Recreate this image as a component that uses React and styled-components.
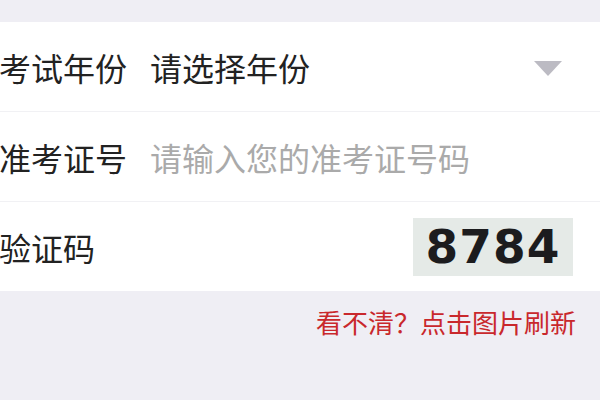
import styled, { createGlobalStyle } from "styled-components";

const GlobalStyle = createGlobalStyle`
    html, body {
        margin: 0;
        padding: 0;
        background: #efeef4;
        overflow: hidden;
    }
    body {
        font-family: "Noto Sans CJK SC", "Noto Sans", sans-serif;
    }
`;

export default function App() {
    return (
        <PageStyled>
            <GlobalStyle />
            <Panel>
                <Row>
                    <Label>考试年份</Label>
                    <Value>请选择年份</Value>
                    <Caret />
                </Row>
                <Row>
                    <Label>准考证号</Label>
                    <Value $placeholder>请输入您的准考证号码</Value>
                </Row>
                <Row>
                    <Label>验证码</Label>
                    <Value />
                    <Captcha>8784</Captcha>
                </Row>
            </Panel>
            <Hint>看不清？点击图片刷新</Hint>
        </PageStyled>
    );
}

const PageStyled = styled.div`
    width: 600px;
    height: 400px;
    padding-top: 22px;
    box-sizing: border-box;
    background: #efeef4;
`;

const Panel = styled.div`
    background: #ffffff;
    display: flex;
    flex-direction: column;
`;

const Row = styled.div`
    height: 89px;
    display: flex;
    align-items: center;
    padding-right: 27px;

    & + & {
        border-top: 1px solid #f1f1f4;
    }
`;

const Label = styled.div`
    width: 151px;
    margin-left: -1px;
    flex-shrink: 0;
    font-size: 32px;
    color: #222222;
    line-height: 1;
`;

const Value = styled.div`
    flex: 1;
    font-size: 32px;
    line-height: 1;
    color: ${(p) => (p.$placeholder ? "#aaaaaa" : "#222222")};
`;

const Caret = styled.div`
    width: 0;
    height: 0;
    border-left: 14px solid transparent;
    border-right: 14px solid transparent;
    border-top: 15px solid #bcbbc3;
    margin-right: 11px;
    margin-top: 4px;
`;

const Captcha = styled.div`
    width: 160px;
    height: 58px;
    background: #e5eae7;
    display: flex;
    align-items: center;
    justify-content: center;
    font-family: "DejaVu Sans", sans-serif;
    font-weight: bold;
    font-size: 47px;
    letter-spacing: 1px;
    color: #1c1c1e;
`;

const Hint = styled.div`
    text-align: right;
    padding-right: 24px;
    margin-top: 15px;
    font-size: 26px;
    line-height: 1.2;
    color: #c9282c;
`;
